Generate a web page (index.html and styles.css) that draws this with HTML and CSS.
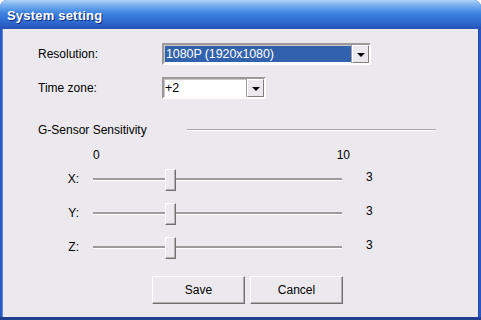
FILE: index.html
```html
<!DOCTYPE html>
<html lang="en">
<head>
  <meta charset="UTF-8" />
  <title>System setting</title>
  <link rel="stylesheet" href="styles.css">
</head>
<body>
  <div class="window">
    <div class="titlebar">System setting</div>

    <div class="content">
      <div class="form-row">
        <span class="label">Resolution:</span>
        <div class="combo combo-wide">
          <span class="combo-value selected">1080P (1920x1080)</span>
          <span class="combo-btn"><i class="arrow"></i></span>
        </div>
      </div>

      <div class="form-row">
        <span class="label">Time zone:</span>
        <div class="combo combo-small">
          <span class="combo-value">+2</span>
          <span class="combo-btn"><i class="arrow"></i></span>
        </div>
      </div>

      <div class="group-head">
        <span>G-Sensor Sensitivity</span>
        <span class="group-line"></span>
      </div>

      <div class="scale">
        <span>0</span>
        <span>10</span>
      </div>

      <div class="slider-row">
        <span class="axis">X:</span>
        <div class="track"><span class="thumb"></span></div>
        <span class="value">3</span>
      </div>
      <div class="slider-row">
        <span class="axis">Y:</span>
        <div class="track"><span class="thumb"></span></div>
        <span class="value">3</span>
      </div>
      <div class="slider-row">
        <span class="axis">Z:</span>
        <div class="track"><span class="thumb"></span></div>
        <span class="value">3</span>
      </div>

      <div class="buttons">
        <button class="btn">Save</button>
        <button class="btn">Cancel</button>
      </div>
    </div>
  </div>
</body>
</html>
```

FILE: styles.css
```css
/* General */
body {
  margin: 0;
  background: #ffffff;
  font-family: "Liberation Sans", Arial, sans-serif;
  font-size: 12px;
  color: #000;
}

/* Window frame */
.window {
  width: 481px;
  height: 320px;
  box-sizing: border-box;
  display: flex;
  flex-direction: column;
  border-radius: 7px 7px 0 0;
  overflow: hidden;
  background: #2a58c2;
  box-shadow: inset 0 -3px 0 #203f90;
}

.titlebar {
  height: 29px;
  flex-shrink: 0;
  box-sizing: border-box;
  padding: 8px 0 0 7px;
  color: #fff;
  font-weight: bold;
  font-size: 13px;
  letter-spacing: 0.2px;
  text-shadow: 1px 1px 0 #0f2a7a;
  background: linear-gradient(to bottom,
    #b4d6f8 0px, #8dbef2 3px, #6aa6ec 7px, #4a8ee4 11px,
    #3a7cdc 15px, #3270d4 20px, #2a60c6 25px, #2552b6 29px);
}

.content {
  flex: 1;
  margin: 0 3px 3px 3px;
  padding: 14px 0 0 35px;
  background: #ebe9ed;
  box-shadow: -1px 0 0 #5a8ae8, 1px 0 0 #1e48a8;
}

/* Form rows */
.form-row {
  display: flex;
  align-items: center;
  height: 22px;
  margin-bottom: 12px;
}

.label {
  width: 124px;
}

.combo {
  display: flex;
  box-sizing: border-box;
  height: 22px;
  border: 2px solid;
  border-color: #9a9a9a #ffffff #ffffff #9a9a9a;
  background: #fff;
  box-shadow: inset 1px 1px 0 #c8c8c8;
}

.combo-wide { width: 209px; }
.combo-small { width: 104px; }

.combo-value {
  flex: 1;
  padding: 1px 0 0 1px;
  line-height: 16px;
  font-size: 12.5px;
}

.combo-value.selected {
  margin: 1px;
  padding-top: 0;
  background: #3261ad;
  color: #fff;
  letter-spacing: -0.1px;
}

.combo-btn {
  width: 17px;
  box-sizing: border-box;
  display: flex;
  align-items: center;
  justify-content: center;
  background: #ebe9ed;
  border: 1px solid;
  border-color: #ffffff #808080 #808080 #ffffff;
  box-shadow: -1px 0 0 #a0a0a0;
}

.arrow {
  width: 0;
  height: 0;
  border-left: 4px solid transparent;
  border-right: 4px solid transparent;
  border-top: 4px solid #000;
  margin-top: 2px;
}

/* Sensor group */
.group-head {
  display: flex;
  align-items: center;
  margin-top: 24px;
  padding-right: 42px;
  height: 14px;
}

.group-line {
  flex: 1;
  margin-left: 40px;
  border-top: 1px solid #a7a6aa;
  border-bottom: 1px solid #ffffff;
}

.scale {
  display: flex;
  justify-content: space-between;
  width: 257px;
  margin: 11px 0 0 55px;
  height: 14px;
}

.slider-row {
  display: flex;
  align-items: center;
  height: 22px;
  margin-top: 12px;
}

.scale + .slider-row {
  margin-top: 6px;
}

.axis {
  width: 41px;
  text-align: right;
  margin-right: 14px;
}

.track {
  position: relative;
  width: 249px;
  height: 3px;
  border-top: 2px solid #9c9c9c;
  border-bottom: 1px solid #ffffff;
  box-sizing: border-box;
  background: #c4c4c4;
  margin-top: 1px;
}

.thumb {
  position: absolute;
  left: 72px;
  top: -11px;
  width: 11px;
  height: 22px;
  box-sizing: border-box;
  background: #ebe9ed;
  border: 1px solid;
  border-color: #ffffff #707070 #707070 #ffffff;
  box-shadow: inset -1px -1px 0 #b0b0b0;
}

.value {
  margin-left: 24px;
  margin-top: -4px;
}

/* Buttons */
.buttons {
  display: flex;
  gap: 5px;
  margin: 18px 0 0 114px;
}

.btn {
  width: 93px;
  height: 28px;
  font-family: "Liberation Sans", Arial, sans-serif;
  font-size: 12px;
  background: #ebe9ed;
  border: 1px solid;
  border-color: #ffffff #707070 #707070 #ffffff;
  box-shadow: inset -1px -1px 0 #b0b0b0;
  padding: 0;
}
```
